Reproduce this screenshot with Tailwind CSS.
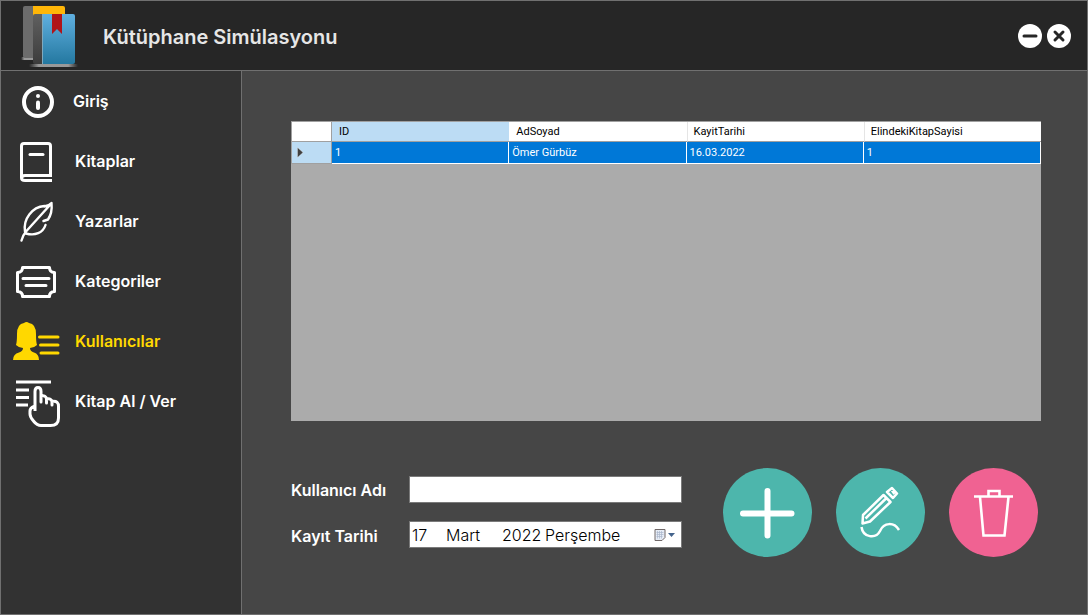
<!DOCTYPE html>
<html lang="tr">
<head>
<meta charset="utf-8">
<meta name="viewport" content="width=device-width, initial-scale=1">
<title>Kütüphane Simülasyonu</title>
<script src="https://cdn.jsdelivr.net/npm/@tailwindcss/browser@4"></script>
</head>
<body class="flex min-h-screen flex-col border border-[#707070] bg-[#464646] font-['Inter',sans-serif] text-base text-white">
<header class="flex h-[70px] shrink-0 items-center border-b border-[#707070] bg-[#262626] pr-4 pl-5">
  <svg class="mt-px h-16 w-[60px] shrink-0" viewBox="0 0 60 64" aria-hidden="true">
    <defs>
      <linearGradient id="blue" x1="0" y1="0" x2="0" y2="1"><stop offset="0" stop-color="#60b0e0"/><stop offset="1" stop-color="#2478a0"/></linearGradient>
      <linearGradient id="spine" x1="0" y1="0" x2="0" y2="1"><stop offset="0" stop-color="#606060"/><stop offset="1" stop-color="#3c3c3c"/></linearGradient>
      <linearGradient id="shade" x1="0" y1="0" x2="1" y2="0"><stop offset="0" stop-color="#999" stop-opacity="0"/><stop offset=".2" stop-color="#999"/><stop offset=".8" stop-color="#999"/><stop offset="1" stop-color="#999" stop-opacity="0"/></linearGradient>
    </defs>
    <rect y="53" width="16" height="3" rx="1" fill="url(#shade)"/>
    <rect x="2" y="2" width="16" height="52" rx="2" fill="#6c6c6c"/>
    <path d="M12 2h30q2 0 2 2v8H12z" fill="#ffb608"/>
    <rect x="8" y="60" width="49" height="3" rx="1" fill="url(#shade)"/>
    <path d="M14 10h8v50h-8q-2 0-2-2V12q0-2 2-2z" fill="url(#spine)"/>
    <path d="M22 10h30q2 0 2 2v46q0 2-2 2H22z" fill="url(#blue)"/>
    <path d="M21.500 10v50" stroke="#7fa9bd"/>
    <path d="M31 10h10v20l-5-5-5 5z" fill="#b01419"/>
  </svg>
  <h1 class="ml-[22px] flex-1 pt-[2px] text-xl font-semibold text-[#e6e6e6]">Kütüphane Simülasyonu</h1>
  <div class="flex gap-[5px]">
    <button type="button" aria-label="Küçült" class="size-6 rounded-full bg-white">
      <svg class="size-6" viewBox="0 0 24 24"><path d="M6 12h12" stroke="#262626" stroke-width="3" stroke-linecap="round"/></svg>
    </button>
    <button type="button" aria-label="Kapat" class="size-6 rounded-full bg-white">
      <svg class="size-6" viewBox="0 0 24 24"><path d="M8 8l8 8M16 8l-8 8" stroke="#262626" stroke-width="3" stroke-linecap="round"/></svg>
    </button>
  </div>
</header>
<div class="flex flex-1">
  <nav aria-label="Menü" class="w-[241px] shrink-0 border-r border-[#707070] bg-[#323232] font-semibold">
    <ul>
      <li><a href="#giris" class="flex h-[60px] items-center gap-3 pl-3">
        <svg class="h-12 w-12" viewBox="0 0 48 48" fill="none" stroke="#fff" stroke-linecap="round"><circle cx="25" cy="25" r="14" stroke-width="4"/><path d="M25 25.500v5.500" stroke-width="4"/><circle cx="25" cy="19" r="2" fill="#fff" stroke="none"/></svg>
        <span>Giriş</span></a></li>
      <li><a href="#kitaplar" class="flex h-[60px] items-center gap-[14px] pl-3">
        <svg class="h-12 w-12" viewBox="0 0 48 48" fill="none" stroke="#fff" stroke-width="3" stroke-linejoin="round"><path d="M37.500 38V9q0-2.500-2.500-2.500H11Q8.500 6.500 8.500 9v32q0 2.500 3.500 2.500h27M39 38.500H12q-3.500 0-3.500 3M37.500 38V9"/><path d="M17 17.500h13" stroke-linecap="round"/></svg>
        <span>Kitaplar</span></a></li>
      <li><a href="#yazarlar" class="flex h-[60px] items-center gap-[14px] pl-3">
        <svg class="h-12 w-12" viewBox="0 0 48 48" fill="none" stroke="#fff" stroke-width="2.400" stroke-linecap="round" stroke-linejoin="round"><path d="M8.500 43.500Q10 38 13 34.500L37 8M31.500 9C19 10 10 22 12 34.500M31 9.500Q36 9 38.500 6Q39.500 16 35 22.500L30.500 24M13 36.500C22 39 30 36 32.500 28"/></svg>
        <span>Yazarlar</span></a></li>
      <li><a href="#kategoriler" class="flex h-[60px] items-center gap-[14px] pl-3">
        <svg class="h-12 w-12" viewBox="1 0 48 48" fill="none" stroke="#fff" stroke-width="3" stroke-linejoin="round"><path d="M10.500 10.500h27q0 5 5 5v19q-5 0-5 5h-27q0-5-5-5v-19q5 0 5-5z"/><path d="M11 21.500h26M14 28.500h20" stroke-linecap="round"/></svg>
        <span>Kategoriler</span></a></li>
      <li><a href="#kullanicilar" aria-current="page" class="flex h-[60px] items-center gap-[14px] pl-3 text-[#ffd800]">
        <svg class="h-12 w-12" viewBox="1 0 48 48" fill="currentColor"><path d="M1 43q0-6 6-7.500Q11 34 11 31Q7 31 4 28Q5 25 5 17Q5 7 12 6q2.500-2 5 0Q24 7 24 17q0 8 1 11q-3 3-7 3q0 3 4 4.500Q27 37 27 43z"/><path d="M27.500 20H46M28.500 28H46M29 36H46" stroke="currentColor" stroke-width="3" stroke-linecap="round"/></svg>
        <span>Kullanıcılar</span></a></li>
      <li><a href="#kitap-al-ver" class="flex h-[60px] items-center gap-[14px] pl-3">
        <svg class="h-12 w-12 overflow-visible" viewBox="1 -1 48 48" fill="none" stroke="#fff" stroke-width="3" stroke-linejoin="round"><path d="M4 4h35M4 12h13M4 19.500h13M4 27h12"/><path d="M23 33V13.500q0-4 3-4t3 4V24v-6q5-1 5.500 3v4-4q5-1 5.500 3v3-3.500q7-1 6.500 5.500v11q0 7.500-8 7.500H29q-4 0-7.500-4.500Q18 39 18 36v-3q0-3 4-4.500"/></svg>
        <span>Kitap Al / Ver</span></a></li>
    </ul>
  </nav>
  <main class="flex min-w-0 flex-1 flex-col pt-[50px] pr-[46px] pb-[57px] pl-[49px]">
    <div class="min-h-[300px] flex-1 border-t border-[#a0a0a0] bg-[#ababab]">
      <table class="w-full table-fixed border-separate border-spacing-0 border-l border-[#a0a0a0] text-left font-['Roboto',sans-serif] text-[11px] leading-4 text-black">
        <thead>
          <tr class="h-5 bg-white">
            <th class="w-10 border-r border-b border-[#a0a0a0]" aria-label="Satır"></th>
            <th class="border-b border-[#a0a0a0] bg-[#bcdcf4] pl-[7px] font-normal">ID</th>
            <th class="border-b border-[#a0a0a0] pl-[7px] font-normal">AdSoyad</th>
            <th class="border-b border-l border-b-[#a0a0a0] border-l-[#e5e5e5] pl-[6px] font-normal">KayitTarihi</th>
            <th class="border-b border-l border-b-[#a0a0a0] border-l-[#e5e5e5] pl-[6px] font-normal">ElindekiKitapSayisi</th>
          </tr>
        </thead>
        <tbody>
          <tr class="h-[22px] bg-[#0078d7] text-white">
            <th class="border-r border-b border-r-[#a0a0a0] border-b-[#a0a0a0] bg-[#bcdcf4] pl-[5px]" aria-label="Seçili satır"><svg class="h-[11px] w-[7px]" viewBox="0 0 7 11"><path d="M.500 .500l5.500 5-5.500 5z" fill="#404040" stroke="#fff" stroke-width="0.300"/></svg></th>
            <td class="border-r border-b border-white pl-[3px]">1</td>
            <td class="border-r border-b border-white pl-[3px]">Ömer Gürbüz</td>
            <td class="border-r border-b border-white pl-[3px]">16.03.2022</td>
            <td class="border-r border-b border-white pl-[3px]">1</td>
          </tr>
        </tbody>
      </table>
    </div>
    <form class="mt-[47px] flex items-start justify-between">
      <div class="mt-2 grid grid-cols-[118px_273px] items-center gap-y-[18px] font-semibold">
        <label for="ad">Kullanıcı Adı</label>
        <input id="ad" type="text" class="h-[27px] border border-[#7a7a7a] bg-white px-1 font-normal text-black">
        <label for="tarih" class="pt-[3px]">Kayıt Tarihi</label>
        <button id="tarih" type="button" aria-haspopup="dialog" class="flex h-[27px] items-center border border-[#7a7a7a] bg-white pr-[5px] pl-[2px] text-left font-light text-black">
          <span class="w-[34px]">17</span><span class="w-14">Mart</span><span class="w-[43px]">2022</span><span class="flex-1">Perşembe</span>
          <svg class="h-3 w-[22px]" viewBox="0 0 22 12"><path d="M1 .500h10v8l-3 3H1z" fill="#e6ecf5" stroke="#706868"/><path d="M2.500 3.500h7M2.500 5.500h7M2.500 7.500h6M3.500 2v7.500M5.500 2v7.500M7.500 2v7.500" stroke="#a9b6cc" stroke-width=".7"/><path d="M14 4h7l-3.500 4z" fill="#44648c"/></svg>
        </button>
      </div>
      <div class="mr-[3px] flex gap-6">
        <button type="button" aria-label="Ekle" class="size-[89px] rounded-full bg-[#4db6ac]">
          <svg class="size-full" viewBox="0 0 89 89"><path d="M20 45.500h48.500M44.500 23v44.500" stroke="#fff" stroke-width="6" stroke-linecap="round"/></svg>
        </button>
        <button type="button" aria-label="Düzenle" class="size-[89px] rounded-full bg-[#4db6ac]">
          <svg class="size-full" viewBox="0 0 89 89" fill="none" stroke="#fff" stroke-width="2.500" stroke-linejoin="round"><path d="M26.500 55.500L27 47L47.500 27L54.500 34L34 53.500zM29.500 50.500L50 30.500M51 24L56 20L61 25.500L57 30zM56 22.500l2.500 3.500"/><path d="M25.500 59C27 70 40 71 44 63C48 54 58 54 63 62" stroke-width="2.500"/></svg>
        </button>
        <button type="button" aria-label="Sil" class="size-[89px] rounded-full bg-[#f06292]">
          <svg class="size-full" viewBox="0 0 89 89" fill="none" stroke="#fff" stroke-width="2.600"><path d="M25 28.500h39M39.500 28v-5h11v5M31 29l3.500 38.500h21L59.500 29"/></svg>
        </button>
      </div>
    </form>
  </main>
</div>
</body>
</html>
